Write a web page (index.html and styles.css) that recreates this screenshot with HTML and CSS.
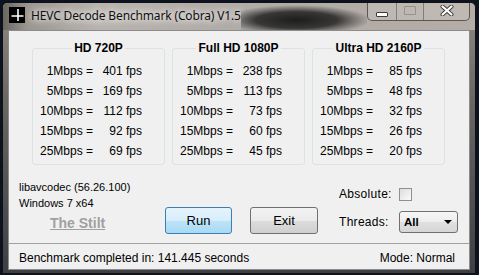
FILE: index.html
```html
<!DOCTYPE html>
<html lang="en">
<head>
  <meta charset="UTF-8">
  <title>HEVC Decode Benchmark (Cobra) V1.5</title>
  <link rel="stylesheet" href="styles.css">
</head>
<body>
  <div class="window">
    <div class="titlebar">
      <svg class="app-icon" width="16" height="16" viewBox="0 0 16 16">
        <rect width="16" height="16" fill="#000"/>
        <path d="M9 2v12M2.5 9h12" stroke="#fff" stroke-width="1.6"/>
      </svg>
      <span class="title">HEVC Decode Benchmark (Cobra) V1.5</span>
      <!-- desktop showing through the glass -->
      <svg class="glass-smear" viewBox="0 0 132 27" preserveAspectRatio="none">
        <defs>
          <radialGradient id="smear" cx="0.5" cy="0.5" r="0.5">
            <stop offset="0" stop-color="#151515" stop-opacity="0.95"/>
            <stop offset="0.55" stop-color="#222" stop-opacity="0.85"/>
            <stop offset="1" stop-color="#333" stop-opacity="0"/>
          </radialGradient>
        </defs>
        <ellipse cx="58" cy="17" rx="78" ry="15" fill="url(#smear)"/>
      </svg>
      <div class="caption">
        <span class="cap-btn cap-min"><i></i></span>
        <span class="cap-btn cap-max"><i></i></span>
        <span class="cap-btn cap-close">
          <svg width="14" height="11" viewBox="0 0 14 11">
            <path d="M2.5 1.5l9 8M11.5 1.5l-9 8" stroke="#3a3a3a" stroke-width="4" stroke-linecap="round"/>
            <path d="M2.5 1.5l9 8M11.5 1.5l-9 8" stroke="#fff" stroke-width="2.2" stroke-linecap="round"/>
          </svg>
        </span>
      </div>
    </div>

    <div class="client">
      <div class="groups">
        <fieldset class="group">
          <legend>HD 720P</legend>
          <div class="rows">
            <span>1Mbps =</span><span>401 fps</span>
            <span>5Mbps =</span><span>169 fps</span>
            <span>10Mbps =</span><span>112 fps</span>
            <span>15Mbps =</span><span>92 fps</span>
            <span>25Mbps =</span><span>69 fps</span>
          </div>
        </fieldset>
        <fieldset class="group">
          <legend>Full HD 1080P</legend>
          <div class="rows">
            <span>1Mbps =</span><span>238 fps</span>
            <span>5Mbps =</span><span>113 fps</span>
            <span>10Mbps =</span><span>73 fps</span>
            <span>15Mbps =</span><span>60 fps</span>
            <span>25Mbps =</span><span>45 fps</span>
          </div>
        </fieldset>
        <fieldset class="group">
          <legend>Ultra HD 2160P</legend>
          <div class="rows">
            <span>1Mbps =</span><span>85 fps</span>
            <span>5Mbps =</span><span>48 fps</span>
            <span>10Mbps =</span><span>32 fps</span>
            <span>15Mbps =</span><span>26 fps</span>
            <span>25Mbps =</span><span>20 fps</span>
          </div>
        </fieldset>
      </div>

      <div class="controls">
        <div class="info">
          <div>libavcodec (56.26.100)</div>
          <div>Windows 7 x64</div>
          <a class="author">The Stilt</a>
        </div>
        <div class="buttons">
          <button class="btn btn-default">Run</button>
          <button class="btn">Exit</button>
        </div>
        <div class="options">
          <span class="opt-label">Absolute:</span>
          <span class="checkbox"></span>
          <span class="opt-label">Threads:</span>
          <span class="combo">All<i class="combo-arrow"></i></span>
        </div>
      </div>

      <div class="statusbar">
        <span>Benchmark completed in: 141.445 seconds</span>
        <span>Mode: Normal</span>
      </div>
    </div>
  </div>
</body>
</html>
```

FILE: styles.css
```css
* {
  box-sizing: border-box;
}
body {
  margin: 0;
  padding: 2px 0 0 2px;
  width: 479px;
  height: 275px;
  overflow: hidden;
  background: #0b1220;
  font-family: "Liberation Sans", Arial, sans-serif;
  font-size: 12px;
  color: #000;
}

/* window frame */
.window {
  width: 474px;
  height: 272px;
  border: 1px solid #111;
  border-radius: 6px 6px 0 0;
  background-color: #6a6764;
  background-image: linear-gradient(180deg, #8e8984, #6a6764 35%, #3d3f44);
  display: flex;
  flex-direction: column;
  overflow: hidden;
}
.titlebar {
  height: 27px;
  flex: none;
  display: flex;
  align-items: flex-start;
  padding-left: 6px;
  background-color: #b1aca7;
  background-image: linear-gradient(90deg, #6a6662, #9a958f 5%, #b8b3ae 20%, #b1aca7 45%, #b4aca6 100%);
}
.app-icon {
  margin-top: 4px;
  flex: none;
}
.title {
  flex: none;
  margin: 5px 0 0 6px;
  font-family: "Noto Sans", "Open Sans", sans-serif;
  font-size: 12px;
  line-height: 16px;
  letter-spacing: -0.15px;
  color: #101010;
  text-shadow: 0 0 6px #fff, 0 0 10px rgba(255, 255, 255, 0.9);
}
.glass-smear {
  flex: 1;
  height: 27px;
  min-width: 0;
}
.caption {
  flex: none;
  margin: -1px 5px 0 0;
  height: 19px;
  display: flex;
  border: 1px solid rgba(55, 50, 48, 0.7);
  border-top: none;
  border-radius: 0 0 5px 5px;
  overflow: hidden;
}
.cap-btn {
  display: flex;
  align-items: center;
  justify-content: center;
  background: rgba(255, 255, 255, 0.15);
}
.cap-btn + .cap-btn {
  border-left: 1px solid rgba(70, 65, 60, 0.5);
}
.cap-min {
  width: 28px;
}
.cap-min i {
  width: 12px;
  height: 5px;
  margin-top: 6px;
  background: #fff;
  border: 1px solid #3b3b3b;
  border-radius: 1px;
}
.cap-max {
  width: 27px;
}
.cap-max i {
  width: 12px;
  height: 9px;
  margin-top: -2px;
  border: 1px solid rgba(120, 115, 110, 0.55);
  border-radius: 1px;
}
.cap-close {
  width: 46px;
}
.cap-close svg {
  margin-top: -1px;
}

/* client area */
.client {
  height: 240px;
  flex: none;
  margin: 0 5px;
  background: #f0f0f0;
  border: 1px solid #8c8c8c;
  display: flex;
  flex-direction: column;
}
.groups {
  display: flex;
  gap: 7px;
  padding: 10px 0 0 23px;
}
.group {
  width: 133px;
  height: 124px;
  margin: 0;
  padding: 6px 0 0 0;
  min-inline-size: 0;
  border: 1px solid #dce2e6;
  border-radius: 3px;
}
.group legend {
  margin: 0 auto;
  padding: 0 2px;
  font-weight: bold;
  font-size: 12px;
  line-height: 14px;
}
.rows {
  display: grid;
  grid-template-columns: 60px 49px;
  grid-auto-rows: 20px;
  line-height: 20px;
  text-align: right;
}

.controls {
  display: grid;
  grid-template-columns: 156px 174px auto;
  margin-top: 14px;
}
.info {
  padding-left: 10px;
  font-size: 11px;
  line-height: 16px;
}
.author {
  display: inline-block;
  margin: 3px 0 0 31px;
  font-size: 14px;
  line-height: 18px;
  font-weight: bold;
  color: #a0a0a0;
  text-decoration: underline;
}
.buttons {
  display: flex;
  gap: 18px;
  padding-top: 28px;
}
.btn {
  width: 68px;
  height: 27px;
  padding: 0;
  font-family: "Liberation Sans", Arial, sans-serif;
  font-size: 13px;
  color: #000;
  border: 1px solid #707070;
  border-radius: 3px;
  background: linear-gradient(180deg, #f2f2f2, #ebebeb 50%, #dddddd 51%, #cfcfcf);
}
.btn-default {
  width: 67px;
  border-color: #3c7fb1;
  background: linear-gradient(180deg, #e5f4fc, #d6eefb 50%, #bde4f8 51%, #a8d9f3);
}
.options {
  display: grid;
  grid-template-columns: 60px 59px;
  grid-template-rows: 14px 22px;
  row-gap: 10px;
  align-items: center;
  padding-top: 8px;
}
.opt-label {
  font-size: 12px;
  letter-spacing: 0.3px;
}
.checkbox {
  width: 13px;
  height: 13px;
  border: 1px solid #8f8f8f;
  background: linear-gradient(135deg, #dcdcdc, #fbfbfb);
}
.combo {
  height: 22px;
  display: flex;
  align-items: center;
  padding-left: 4px;
  font-weight: bold;
  font-size: 11.5px;
  border: 1px solid #707070;
  border-radius: 3px;
  background: linear-gradient(180deg, #f7f7f7, #ececec 50%, #e0e0e0 51%, #d6d6d6);
}
.combo-arrow {
  margin: 0 5px 0 auto;
  width: 0;
  height: 0;
  border-left: 4px solid transparent;
  border-right: 4px solid transparent;
  border-top: 4px solid #000;
}

.statusbar {
  margin-top: auto;
  height: 26px;
  display: flex;
  justify-content: space-between;
  align-items: center;
  padding: 3px 14px 0 10px;
  border-top: 1px solid #a0a0a0;
  background: #f0f0f0;
}
```
